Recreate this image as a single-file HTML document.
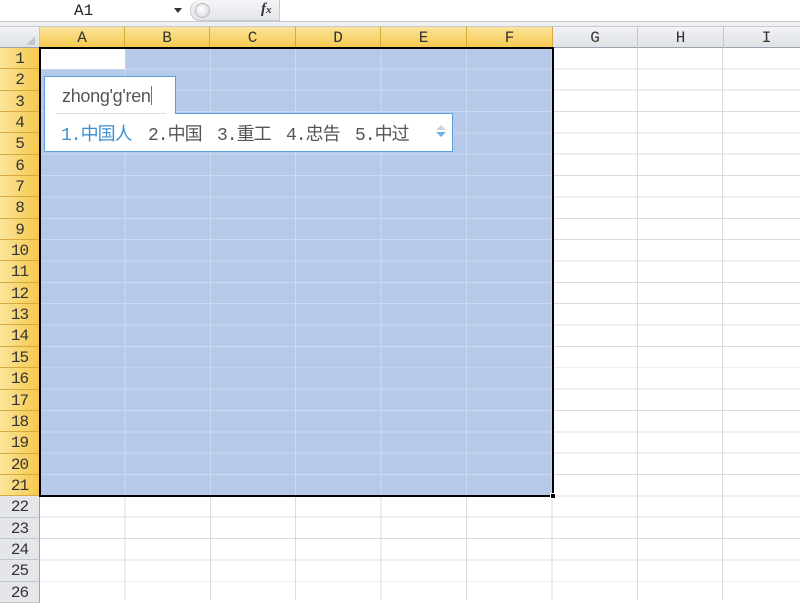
<!DOCTYPE html>
<html><head><meta charset="utf-8"><style>
*{margin:0;padding:0;box-sizing:border-box}
body{width:800px;height:600px;overflow:hidden;background:#fff;font-family:"Liberation Mono","Noto Sans CJK SC",monospace;position:relative}
.abs{position:absolute}
#fbar{left:0;top:0;width:800px;height:22px;background:#fff;border-bottom:1px solid #c6c9ce}
#strip{left:0;top:22px;width:800px;height:5px;background:#eef0f3;border-bottom:1px solid #c6c9ce}
#colh{left:0;top:27px;width:800px;height:21px;background:linear-gradient(#f1f2f4,#dfe2e6);border-bottom:1px solid #9aa3ae}
.ch{position:absolute;top:0;height:21px;line-height:22px;text-align:center;font-size:16px;color:#333;border-right:1px solid #c2c7ce}
.ch.s{background:linear-gradient(#fbe49a,#f5c94c);border-right-color:#d7a93a;color:#333}
#rowh{left:0;top:48px;width:40px;height:552px}
.rh{height:21.35px;line-height:22px;text-align:center;font-size:16px;color:#333;background:#e4e6ea;border-bottom:1px solid #c2c7ce;border-right:1px solid #9aa3ae;letter-spacing:-1px}
.rh.s{background:linear-gradient(90deg,#fbe49a,#f5c94c);border-bottom-color:#d7a93a;border-right-color:#c9982e}
#grid{left:40px;top:48px;width:760px;height:552px;
background-image:repeating-linear-gradient(90deg,transparent 0,transparent 84.4px,#dadcdf 84.4px,#dadcdf 85.4px),repeating-linear-gradient(180deg,transparent 0,transparent 20.35px,#dadcdf 20.35px,#dadcdf 21.35px)}
#sel{left:40px;top:48px;width:513px;height:448px;background-color:#b7c9e9;
background-image:repeating-linear-gradient(90deg,transparent 0,transparent 84.4px,#cfdaee 84.4px,#cfdaee 85.4px),repeating-linear-gradient(180deg,transparent 0,transparent 20.35px,#cfdaee 20.35px,#cfdaee 21.35px)}
#a1{left:40px;top:48px;width:85px;height:21px;background:#fff}
#selb{left:39px;top:47px;width:515px;height:450px;border:2px solid #000}
#handle{left:550px;top:493px;width:6px;height:6px;background:#000;border:1px solid #fff}
.c{position:absolute;top:120px;font-size:18px;color:#555;white-space:nowrap;letter-spacing:-1px}
</style></head><body>
<div class="abs" id="fbar">
 <div class="abs" style="left:74px;top:2px;font-size:16px;color:#222">A1</div>
 <div class="abs" style="left:174px;top:8px;width:0;height:0;border-left:4px solid transparent;border-right:4px solid transparent;border-top:5px solid #333"></div>
 <div class="abs" style="left:190px;top:0;width:90px;height:21px;background:linear-gradient(#f4f5f7,#e3e5e9);border-radius:10px 0 0 10px;border:1px solid #c6c9ce;border-top:none"></div>
 <div class="abs" style="left:195px;top:3px;width:15px;height:15px;border-radius:50%;background:radial-gradient(circle at 40% 40%,#fff,#cfd3d8);border:1px solid #bbb"></div>
 <div class="abs" style="left:261px;top:1px;font-family:'Liberation Serif',serif;font-style:italic;font-weight:bold;font-size:15px;color:#333">f<span style="font-size:11px">x</span></div>
</div>
<div class="abs" id="strip"></div>
<div class="abs" id="colh">
 <div class="ch" style="left:0;width:40px"><div style="position:absolute;right:4px;bottom:3px;width:0;height:0;border-left:9px solid transparent;border-bottom:9px solid #c4c8cd"></div></div>
 <div class="ch s" style="left:40px;width:85px">A</div>
 <div class="ch s" style="left:125px;width:85px">B</div>
 <div class="ch s" style="left:210px;width:86px">C</div>
 <div class="ch s" style="left:296px;width:85px">D</div>
 <div class="ch s" style="left:381px;width:86px">E</div>
 <div class="ch s" style="left:467px;width:86px">F</div>
 <div class="ch" style="left:553px;width:85px">G</div>
 <div class="ch" style="left:638px;width:86px">H</div>
 <div class="ch" style="left:724px;width:86px">I</div>
</div>
<div class="abs" id="rowh">
<div class="rh s">1</div><div class="rh s">2</div><div class="rh s">3</div><div class="rh s">4</div><div class="rh s">5</div><div class="rh s">6</div><div class="rh s">7</div><div class="rh s">8</div><div class="rh s">9</div><div class="rh s">10</div><div class="rh s">11</div><div class="rh s">12</div><div class="rh s">13</div><div class="rh s">14</div><div class="rh s">15</div><div class="rh s">16</div><div class="rh s">17</div><div class="rh s">18</div><div class="rh s">19</div><div class="rh s">20</div><div class="rh s">21</div><div class="rh">22</div><div class="rh">23</div><div class="rh">24</div><div class="rh">25</div><div class="rh">26</div>
</div>
<div class="abs" id="grid"></div>
<div class="abs" id="sel"></div>
<div class="abs" id="a1"></div>
<div class="abs" id="selb"></div>
<div class="abs" id="handle"></div>
<!-- IME -->
<div class="abs" style="left:44px;top:113px;width:409px;height:39px;background:#fff;border:1px solid #5aa0dc"></div>
<div class="abs" style="left:44px;top:76px;width:132px;height:38px;background:#fff;border:1px solid #5aa0dc;border-bottom:none"></div>
<div class="abs" style="left:56px;top:113px;width:110px;height:1px;background:#ddd"></div>
<div class="abs" style="left:62px;top:86px;font-family:'Liberation Sans',sans-serif;font-size:18px;color:#555;letter-spacing:-0.3px">zhong'g'ren<span style="display:inline-block;width:1px;height:19px;background:#3b7fc4;vertical-align:-3px"></span></div>
<div class="c" style="left:61px;color:#3d8fd0">1.中国人</div>
<div class="c" style="left:148px">2.中国</div>
<div class="c" style="left:217px">3.重工</div>
<div class="c" style="left:286px">4.忠告</div>
<div class="c" style="left:355px">5.中过</div>
<div class="abs" style="left:436px;top:125px;width:0;height:0;border-left:5px solid transparent;border-right:5px solid transparent;border-bottom:5px solid #c9d6e3"></div>
<div class="abs" style="left:436px;top:132px;width:0;height:0;border-left:5px solid transparent;border-right:5px solid transparent;border-top:5px solid #6fb1e6"></div>
</body></html>
